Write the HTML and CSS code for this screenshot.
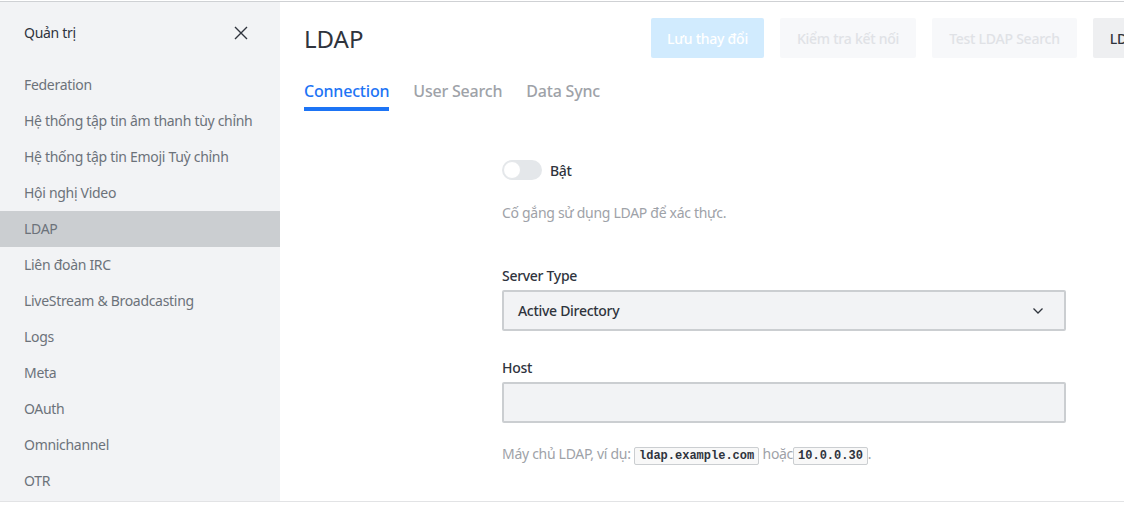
FILE: index.html
```html
<!DOCTYPE html>
<html lang="vi">
<head>
<meta charset="utf-8">
<title>LDAP</title>
<link rel="stylesheet" href="styles.css">
</head>
<body>
<div class="page">
  <aside class="sidebar">
    <div class="side-head">
      <span class="side-title">Quản trị</span>
      <svg class="close" width="14" height="14" viewBox="0 0 14 14"><path d="M1 1L13 13M13 1L1 13" stroke="#2f343d" stroke-width="1.4" fill="none"/></svg>
    </div>
    <nav class="side-list">
      <div class="side-item">Federation</div>
      <div class="side-item">Hệ thống tập tin âm thanh tùy chỉnh</div>
      <div class="side-item">Hệ thống tập tin Emoji Tuỳ chỉnh</div>
      <div class="side-item">Hội nghị Video</div>
      <div class="side-item active">LDAP</div>
      <div class="side-item">Liên đoàn IRC</div>
      <div class="side-item">LiveStream &amp; Broadcasting</div>
      <div class="side-item">Logs</div>
      <div class="side-item">Meta</div>
      <div class="side-item">OAuth</div>
      <div class="side-item">Omnichannel</div>
      <div class="side-item">OTR</div>
    </nav>
  </aside>
  <main class="main">
    <header class="main-head">
      <h1 class="title">LDAP</h1>
      <div class="actions">
        <button class="btn btn-primary">Lưu thay đổi</button>
        <button class="btn btn-disabled">Kiểm tra kết nối</button>
        <button class="btn btn-disabled">Test LDAP Search</button>
        <button class="btn btn-secondary">LDAP Sync Now</button>
      </div>
    </header>
    <div class="tabs">
      <div class="tab active">Connection</div>
      <div class="tab">User Search</div>
      <div class="tab">Data Sync</div>
    </div>
    <section class="form">
      <div class="toggle-row">
        <span class="toggle"><span class="knob"></span></span>
        <span class="toggle-label">Bật</span>
      </div>
      <p class="hint hint-top">Cố gắng sử dụng LDAP để xác thực.</p>
      <div class="field">
        <label class="label">Server Type</label>
        <div class="select">
          <span>Active Directory</span>
          <svg width="12" height="8" viewBox="0 0 12 8"><path d="M1.5 1.5L6 6L10.5 1.5" stroke="#2f343d" stroke-width="1.3" fill="none"/></svg>
        </div>
      </div>
      <div class="field">
        <label class="label">Host</label>
        <div class="input"></div>
      </div>
      <p class="hint hint-host">Máy chủ LDAP, ví dụ: <code>ldap.example.com</code> hoặc<code>10.0.0.30</code>.</p>
    </section>
  </main>
</div>
</body>
</html>
```
FILE: styles.css
```css
* { box-sizing: border-box; }
html, body { margin: 0; padding: 0; background: #fff; overflow: hidden; }
body { font-family: "Noto Sans", "Open Sans", sans-serif; font-size: 14px; color: #2f343d; letter-spacing: -0.3px; }

.page {
  margin-top: 1px;
  height: 501px;
  border-top: 1px solid #cfd1d4;
  border-bottom: 1px solid #e2e3e5;
  display: flex;
  width: 1124px;
}

.sidebar { width: 280px; flex: none; background: #f2f3f5; }
.side-head {
  height: 65px;
  display: flex;
  align-items: center;
  justify-content: space-between;
  padding: 0 32px 4px 24px;
}
.side-title { font-size: 14px; color: #2f343d; }
.close { display: block; }
.side-item {
  height: 36px;
  line-height: 36px;
  padding-left: 24px;
  color: #6c727a;
  white-space: nowrap;
}
.side-item.active { background: #cbced1; }

.main { flex: 1; min-width: 0; padding-left: 24px; overflow: hidden; }
.main-head {
  display: flex;
  align-items: center;
  padding-top: 16px;
  height: 56px;
}
.title { margin: 0; width: 347px; flex: none; font-size: 24px; font-weight: 400; color: #2f343d; letter-spacing: 0; }
.actions { display: flex; gap: 16px; white-space: nowrap; flex: none; }
.btn {
  height: 40px;
  padding: 0 17px;
  border: 0;
  border-radius: 2px;
  font-family: inherit;
  font-size: 14px;
  font-weight: 500;
  letter-spacing: -0.25px;
}
.btn-primary { background: #d1ebfe; color: #fff; padding: 0 16px; }
.btn-disabled { background: #f7f8fa; color: #e0e2e6; }
.btn-disabled:first-of-type { padding: 0 16px; }
.btn-secondary { background: #eeeff1; color: #2f343d; }

.tabs { display: flex; gap: 24px; margin-top: 21px; }
.tab {
  font-size: 16px;
  font-weight: 500;
  color: #9ea2a8;
  padding-bottom: 4px;
  border-bottom: 4px solid transparent;
  line-height: 24px;
  letter-spacing: -0.2px;
}
.tab.active { color: #1d74f5; border-bottom-color: #1d74f5; }

.form { width: 564px; margin-left: 198px; padding-top: 49px; }
.toggle-row { display: flex; align-items: center; gap: 8px; height: 20px; }
.toggle {
  width: 40px; height: 20px; border-radius: 10px; background: #e4e7ea;
  position: relative; display: block;
}
.knob {
  position: absolute; left: 1px; top: 1px; width: 18px; height: 18px;
  border-radius: 50%; background: #fff; border: 1px solid #e4e7ea;
}
.toggle-label { font-size: 14px; font-weight: 500; color: #2f343d; }
.hint { margin: 0; color: #9ea2a8; font-size: 14px; line-height: 20px; }
.hint-top { margin-top: 23px; }

.field { display: flex; flex-direction: column; }
.hint-top + .field { margin-top: 43px; }
.field + .field { margin-top: 27px; }
.label { font-size: 14px; font-weight: 500; line-height: 20px; color: #2f343d; margin-bottom: 4px; }
.select, .input {
  height: 41px;
  background: #f2f3f5;
  border: 2px solid #cbced1;
  border-radius: 2px;
}
.select {
  display: flex; align-items: center; justify-content: space-between;
  padding: 0 20px 0 14px; font-weight: 500;
}
.hint-host { margin-top: 21px; }
code {
  font-family: "Liberation Mono", "DejaVu Sans Mono", monospace;
  font-weight: 700;
  font-size: 12px;
  letter-spacing: 0;
  color: #2f343d;
  background: #f8f8f8;
  border: 1px solid #cbced1;
  border-radius: 2px;
  padding: 1px 4px;
}
```
